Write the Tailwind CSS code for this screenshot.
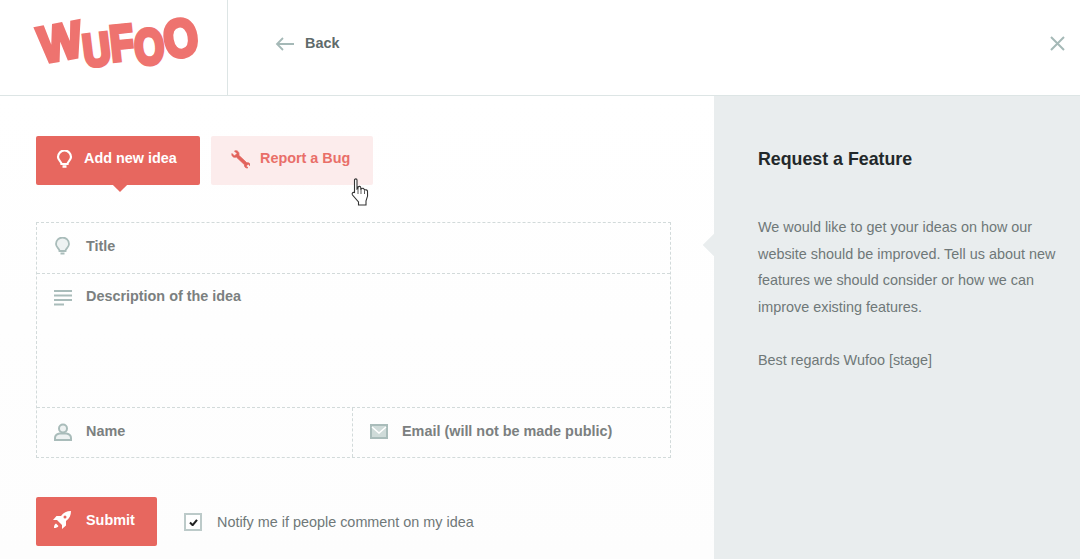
<!DOCTYPE html>
<html lang="en">
<head>
    <meta charset="UTF-8">
    <meta name="viewport" content="width=device-width, initial-scale=1.0">
    <title>Request a Feature</title>
    <script src="https://cdn.jsdelivr.net/npm/@tailwindcss/browser@4"></script>
</head>
<body class="h-[559px] w-[1080px] overflow-hidden bg-white font-['Liberation_Sans',Arial,sans-serif] text-[14.4px]">
    <!-- Header -->
    <header class="flex h-[96px] border-b border-[#dde5e5]">
        <div class="w-[228px] border-r border-[#dde5e5] pl-[23px] pt-[5px]">
            <svg width="194" height="80" viewBox="-10 -10 194 80">
                <g fill="#ee736f" stroke="#ee736f" stroke-width="3.600" font-family="'Liberation Sans',Arial,sans-serif" font-weight="700">
                    <text transform="translate(9 48) rotate(-10) scale(1 1.100)" font-size="46">W</text>
                    <text transform="translate(52 52) rotate(-7) scale(1 1.200)" font-size="38">U</text>
                    <text transform="translate(79 46) rotate(-6) scale(1 1.300)" font-size="38">F</text>
                    <text transform="translate(103 50) rotate(-5) scale(1 1.300)" font-size="38">O</text>
                    <text transform="translate(134 44) rotate(-10) scale(1 1.200)" font-size="44">O</text>
                </g>
            </svg>
        </div>
        <a class="ml-[47px] flex items-center gap-[10px] pb-[8px] font-bold text-[#5f6b6b]">
            <svg width="20" height="14" viewBox="0 0 20 14" fill="none" stroke="#a5b9b7" stroke-width="1.800" class="mb-[-1px]"><path d="M19 7H2M8 1 2 7l6 6"/></svg>
            <span>Back</span>
        </a>
        <button class="ml-auto mr-[15px] mb-[8px] self-center">
            <svg width="15" height="15" viewBox="0 0 15 15" stroke="#a5b9b7" stroke-width="2"><path d="M1 1l13 13M14 1 1 14"/></svg>
        </button>
    </header>

    <div class="relative flex h-[463px]">
        <!-- Form column -->
        <main class="w-[714px] bg-gradient-to-b from-white to-[#fdfdfd] pl-[36px] pt-[40px]">
            <div class="flex gap-[11px]">
                <button class="relative flex h-[49px] w-[164px] items-center gap-[11px] rounded-[2px] bg-[#e7675f] pb-[3px] pl-[20px] font-bold text-white">
                    <svg width="17" height="19" viewBox="0 0 17 19" fill="none" stroke="#fff" stroke-width="2.200"><path d="M5.500 14c0-2.500-3.500-3.500-3.500-7a6.500 6.500 0 0 1 13 0c0 3.500-3.500 4.500-3.500 7z"/><path d="M6.500 16.500h4" stroke-width="2.500"/></svg>
                    <span>Add new idea</span>
                    <span class="absolute left-[79px] top-[44px] size-[10px] rotate-45 bg-[#e7675f]"></span>
                </button>
                <button class="flex h-[49px] w-[162px] items-center gap-[10px] rounded-[2px] bg-[#fcecec] pb-[3px] pl-[20px] font-bold text-[#e96f69]">
                    <svg width="19" height="19" viewBox="0 0 19 19" fill="#e2635c" stroke="#e2635c" stroke-width=".8"><path d="M1 3.500 3.500 6 6 3.500 3.500 1C5.800 0 8 1.500 8 4c0 .5 0 .9-.2 1.300l8 7.500c1-.3 2-.2 2.700.6.600.7.700 1.500.5 2.300l-1.800-1.700-2 2 1.800 1.800c-2 .7-3.900-.8-3.500-3.100L5.300 7C2.800 8.100.2 6 1 3.500z"/></svg>
                    <span>Report a Bug</span>
                </button>
            </div>

            <form class="mt-[37px] h-[236px] w-[635px] border border-dashed border-[#d2dada] font-bold text-[#7b8080]">
                <label class="flex h-[51px] items-center gap-[15px] border-b border-dashed border-[#d2dada] pb-[3px] pl-[17px]">
                    <svg width="17" height="19" viewBox="0 0 17 19" fill="#eef2f2" stroke="#a9bcba" stroke-width="1.800"><path d="M5.500 14c0-2.500-3.500-3.500-3.500-7a6.500 6.500 0 0 1 13 0c0 3.500-3.500 4.500-3.500 7z"/><path d="M6.500 16.500h4" stroke-width="2"/></svg>
                    <span>Title</span>
                </label>
                <label class="flex h-[134px] items-start gap-[14px] border-b border-dashed border-[#d2dada] pl-[17px] pt-[12px]">
                    <svg width="18" height="16" viewBox="0 0 18 16" fill="#a9bcba" class="mt-[4px]"><path d="M0 0h18v2H0zM0 4.500h18v2H0zM0 9h18v2H0zM0 13.500h10v2H0z"/></svg>
                    <span>Description of the idea</span>
                </label>
                <div class="flex h-[49px]">
                    <label class="flex w-[316px] items-center gap-[14px] border-r border-dashed border-[#d2dada] pb-[2px] pl-[17px]">
                        <svg width="18" height="18" viewBox="0 0 18 18" fill="#eef2f2" stroke="#a9bcba" stroke-width="2"><circle cx="9" cy="5.500" r="4"/><path d="M1 17v-2c0-3 2.500-4 4.500-4.500h7C14.500 11 17 12 17 15v2z"/></svg>
                        <span>Name</span>
                    </label>
                    <label class="flex flex-1 items-center gap-[14px] pb-[2px] pl-[17px]">
                        <svg width="18" height="15" viewBox="0 0 18 15"><path fill="#a9bcba" d="M0 0h18v15H0z"/><path fill="#cfdbd9" d="M2 2h14v11H2z"/><path fill="none" stroke="#fff" stroke-width="1.500" d="M2 3l7 6 7-6"/></svg>
                        <span>Email (will not be made public)</span>
                    </label>
                </div>
            </form>

            <div class="mt-[39px] flex items-center">
                <button class="flex h-[49px] w-[121px] items-center gap-[15px] rounded-[2px] bg-[#e7675f] pb-[2px] pl-[17px] font-bold text-white">
                    <svg width="18" height="18" viewBox="0 0 18 18" fill="#fff" class="mt-[-2px]"><path d="M18 0c-4.500 0-7.500 1.500-10 5H3.500L0 9h4l5 5v4l4-3.500V10c3.500-2.500 5-5.500 5-10zM12 4.500a1.500 1.500 0 1 1 0 3 1.500 1.500 0 0 1 0-3zM3 12.500c-1.500.8-2 2.500-2 4.500 2 0 3.700-.5 4.500-2z"/></svg>
                    <span>Submit</span>
                </button>
                <label class="ml-[27px] mt-[2px] flex items-center gap-[15px] text-[#6f7878]">
                    <span class="flex size-[18px] items-center justify-center border-2 border-[#bccac9] bg-white">
                        <svg width="9" height="7" viewBox="0 0 10 8" fill="none" stroke="#222" stroke-width="2.400"><path d="M1 4l3 3 5-6"/></svg>
                    </span>
                    <span>Notify me if people comment on my idea</span>
                </label>
            </div>
        </main>

        <!-- Side panel -->
        <aside class="relative flex-1 bg-[#e9edee] pl-[44px] pt-[52px] text-[#6f7878]">
            <span class="absolute left-[-8px] top-[141px] size-[16px] rotate-45 bg-[#e9edee]"></span>
            <h2 class="text-[17.800px] font-bold leading-[22px] text-[#22282a]">Request a Feature</h2>
            <p class="mt-[44px] w-[310px] leading-[26.670px]">We would like to get your ideas on how our website should be improved. Tell us about new features we should consider or how we can improve existing features.</p>
            <p class="mt-[26.670px] leading-[26.670px]">Best regards Wufoo [stage]</p>
        </aside>

        <!-- Mouse cursor in the screenshot -->
        <svg class="absolute left-[351px] top-[82px]" width="20" height="29" viewBox="0 0 20 29" fill="#fff" stroke="#333" stroke-width="1.100">
            <path d="M3.500 2c0-1.500 2.500-1.500 2.500 0v9l1-.5V9c1-1 2.500-.8 2.800.5V11l.7-.3c1-.8 2.300-.5 2.600.6l.4.700c1-.5 2.500-.2 3 1 .5 3 0 7-1.500 10v4H7.500v-3L1.500 17c-1-2 .3-3 2-2.500V2z"/>
            <path d="M7 11v5M10 11v5M13.500 12.500V16" stroke-width=".8"/>
        </svg>
    </div>
</body>
</html>
